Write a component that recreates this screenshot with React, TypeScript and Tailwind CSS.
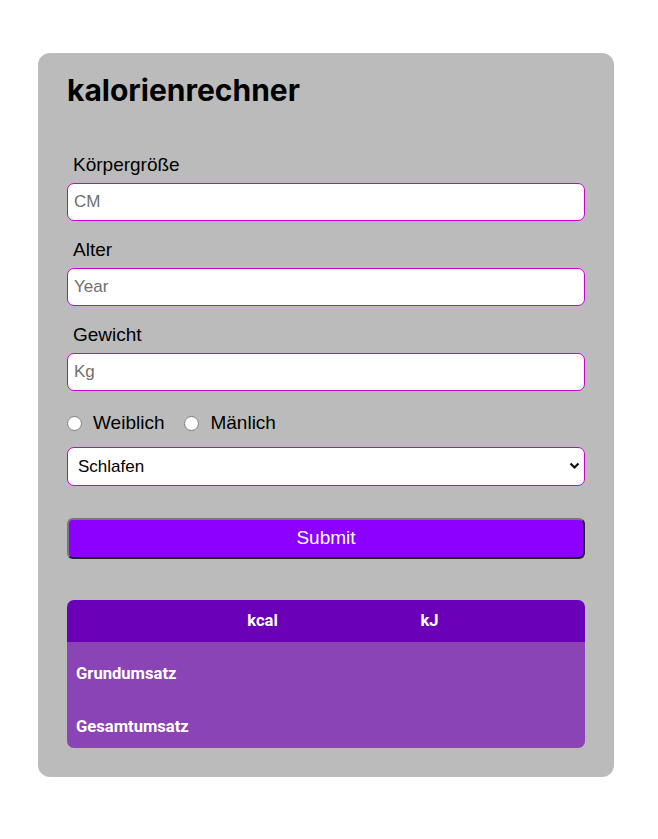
import React from 'react';

const fields = [
  { label: 'Körpergröße', placeholder: 'CM' },
  { label: 'Alter', placeholder: 'Year' },
  { label: 'Gewicht', placeholder: 'Kg' },
];

export default function App() {
  return (
    <div className="min-h-screen bg-white pt-[53px] pb-[60px] font-['Liberation_Sans',Arial,sans-serif]">
      <div className="ml-[38px] w-[576px] rounded-[12px] bg-[#bbbbbb] px-[29px] pt-[19px] pb-[29px]">
        {/* Title */}
        <h1 className="font-['Inter',sans-serif] text-[30px] font-bold leading-[36px] text-black">kalorienrechner</h1>

        {/* Inputs */}
        <div className="mt-[46px] flex flex-col gap-[18px]">
          {fields.map((f) => (
            <div key={f.label} className="flex flex-col">
              <label className="mb-[7px] pl-[6px] text-[19px] leading-[22px] text-black">{f.label}</label>
              <input
                type="text"
                placeholder={f.placeholder}
                className="h-[38px] w-full rounded-[7px] border border-[#cc00cc] bg-white pl-[6px] text-[17px] text-black outline-none placeholder:text-[#6f6f6f]"
              />
            </div>
          ))}
        </div>

        {/* Gender */}
        <div className="mt-[21px] flex items-center text-[19px] leading-[22px] text-black">
          <input type="radio" name="gender" className="m-0 h-[15px] w-[15px]" />
          <span className="ml-[11px]">Weiblich</span>
          <input type="radio" name="gender" className="m-0 ml-[20px] h-[15px] w-[15px]" />
          <span className="ml-[11px]">Mänlich</span>
        </div>

        {/* Activity */}
        <div className="relative mt-[13px]">
          <select className="h-[39px] w-full appearance-none rounded-[7px] border border-[#cc00cc] bg-white pl-[10px] text-[17px] text-black outline-none">
            <option>Schlafen</option>
            <option>Sitzen</option>
            <option>Stehen</option>
            <option>Sport</option>
          </select>
          <svg className="pointer-events-none absolute right-[5px] top-[15px]" width="11" height="8" viewBox="0 0 11 8" fill="none">
            <path d="M1.5 1.5 L5.5 5.5 L9.5 1.5" stroke="#111" strokeWidth="2.2" />
          </svg>
        </div>

        {/* Submit */}
        <button className="mt-[32px] h-[41px] w-full rounded-[6px] border-2 border-[#777777] border-r-[#222222] border-b-[#222222] bg-[#8b00ff] text-[19px] text-white">
          Submit
        </button>

        {/* Result table */}
        <div className="mt-[41px] overflow-hidden rounded-[7px] font-['Roboto',sans-serif] text-[16.6px] font-bold leading-[20px] text-white">
          <div className="grid h-[42px] grid-cols-[112px_167px_167px_1fr] items-center bg-[#6a00b8]">
            <span />
            <span className="text-center">kcal</span>
            <span className="text-center">kJ</span>
            <span />
          </div>
          <div className="bg-[#8a44b6] px-[9px]">
            <div className="pt-[22px] pb-[16px]">Grundumsatz</div>
            <div className="pt-[17px] pb-[11px]">Gesamtumsatz</div>
          </div>
        </div>
      </div>
    </div>
  );
}
